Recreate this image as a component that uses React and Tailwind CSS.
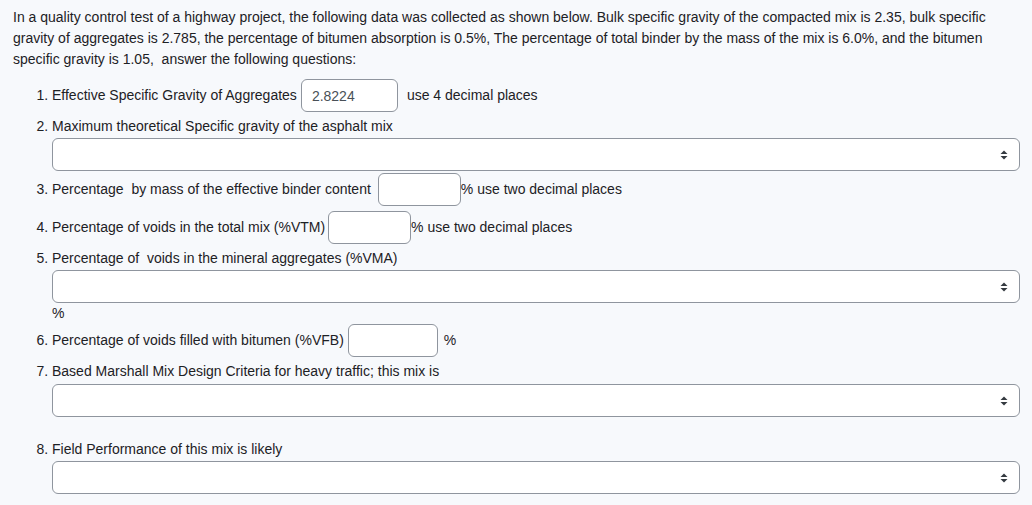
import { useState } from "react";

function SelectArrow() {
  return (
    <svg width="8" height="10" viewBox="0 0 8 10" className="absolute right-[11px] top-1/2 -translate-y-1/2">
      <path d="M4 0.5 L7.5 4 L0.5 4 Z" fill="#343a40" />
      <path d="M4 9.5 L7.5 6 L0.5 6 Z" fill="#343a40" />
    </svg>
  );
}

function Dropdown({ className = "" }) {
  return (
    <div className={`relative h-[33px] w-[968px] rounded-[6px] border border-[#8f959e] bg-white ${className}`}>
      <SelectArrow />
    </div>
  );
}

function Box({ value, onChange, w }) {
  return (
    <input
      type="text"
      value={value}
      onChange={(e) => onChange(e.target.value)}
      className={`h-[33px] ${w} rounded-[6px] border border-[#8f959e] bg-white px-[10px] text-[#495057] outline-none`}
    />
  );
}

export default function App() {
  const [a1, setA1] = useState("2.8224");
  const [a3, setA3] = useState("");
  const [a4, setA4] = useState("");
  const [a6, setA6] = useState("");

  return (
    <div className="min-h-screen bg-[#f7f9fc] px-[13px] pt-[7px] text-[14px] leading-[21px] text-[#1d2125] [font-family:'Liberation_Sans',Arial,sans-serif]">
      <p>
        In a quality control test of a highway project, the following data was collected as shown below. Bulk specific gravity of the compacted mix is 2.35, bulk specific gravity of aggregates is 2.785, the percentage of bitumen absorption is 0.5%, The percentage of total binder by the mass of the mix is 6.0%, and the bitumen specific gravity is 1.05,&nbsp; answer the following questions:
      </p>

      <ol className="mt-[9px] list-decimal pl-[39px]">
        <li>
          <div className="flex items-center">
            <span>Effective Specific Gravity of Aggregates</span>
            <span className="ml-[4px]"><Box value={a1} onChange={setA1} w="w-[97px]" /></span>
            <span className="ml-[9px]">use 4 decimal places</span>
          </div>
        </li>

        <li className="mt-[4px]">
          <div>Maximum theoretical Specific gravity of the asphalt mix</div>
          <Dropdown className="mt-[1px]" />
        </li>

        <li className="mt-[2px]">
          <div className="flex items-center">
            <span>Percentage&nbsp; by mass of the effective binder content</span>
            <span className="ml-[7px]"><Box value={a3} onChange={setA3} w="w-[83px]" /></span>
            <span>% use two decimal places</span>
          </div>
        </li>

        <li className="mt-[5px]">
          <div className="flex items-center">
            <span>Percentage of voids in the total mix (%VTM)</span>
            <span className="ml-[3px]"><Box value={a4} onChange={setA4} w="w-[83px]" /></span>
            <span>% use two decimal places</span>
          </div>
        </li>

        <li className="mt-[4px]">
          <div>Percentage of&nbsp; voids in the mineral aggregates (%VMA)</div>
          <Dropdown className="mt-[1px]" />
          <div>%</div>
        </li>

        <li>
          <div className="flex items-center">
            <span>Percentage of voids filled with bitumen (%VFB)</span>
            <span className="ml-[4px]"><Box value={a6} onChange={setA6} w="w-[90px]" /></span>
            <span className="ml-[6px]">%</span>
          </div>
        </li>

        <li className="mt-[4px]">
          <div>Based Marshall Mix Design Criteria for heavy traffic; this mix is</div>
          <Dropdown className="mt-[2px]" />
        </li>

        <li className="mt-[22px]">
          <div>Field Performance of this mix is likely</div>
          <Dropdown className="mt-[1px]" />
        </li>
      </ol>
    </div>
  );
}
